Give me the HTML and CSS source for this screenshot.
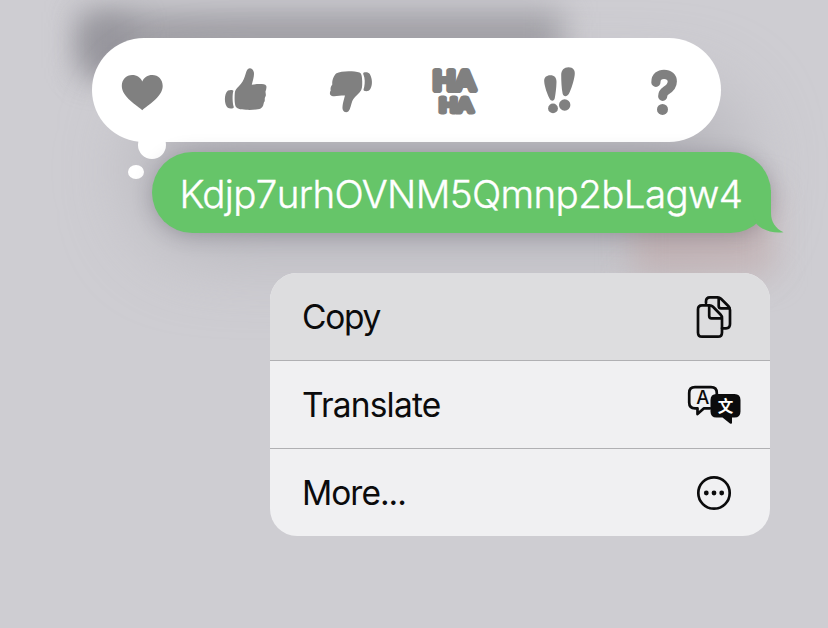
FILE: index.html
```html
<!DOCTYPE html>
<html lang="en">
<head>
<meta charset="utf-8">
<title>Messages</title>
<link rel="stylesheet" href="styles.css">
</head>
<body>
<main class="screen">
  <div class="backdrop">
    <span class="smudge smudge-dark"></span>
    <span class="smudge smudge-corner"></span>
    <span class="smudge smudge-mid"></span>
    <span class="smudge smudge-red"></span>
  </div>
  <section class="reactions">
    <svg class="reaction" viewBox="112 60 60 60"><path d="M142.300 110.300C137.500 105.500 121.800 97 121.800 86C121.800 79.500 126.300 75 132.200 75C137 75 140.500 77.600 142.300 81.500C144 77.600 147.500 75 152.300 75C158.300 75 162.700 79.500 162.700 86C162.700 97 147 105.500 142.300 110.300Z"/></svg>
    <svg class="reaction" viewBox="216 60 60 60"><path d="M249.700 68.200C247.500 68.200 246.700 70.500 245.900 73C244.500 78 243.500 80.500 241 83.700C238 87.500 235.300 88.500 234.800 93C234.500 97 234.400 102 235.300 105.500C236.300 109 240 109.300 246 109.800C252 110.200 258 109.500 260.700 108.400C263.500 106.900 263.400 104 264 102.300C265.300 101 264.500 99.500 264.900 97.700C266.700 95 265.400 93.600 265.500 91.600C266.100 89.500 266.900 87.300 266.200 85.700C264.800 83.600 257 83.900 251.800 84.800C252.800 80.500 254.600 75.500 253.800 72C253.200 69.800 251.700 68.200 249.700 68.200Z"/><path d="M228 90.500C230 89.600 233 89.600 233.400 91C232.300 93.500 232.300 103 233.800 107C234 108.800 229.500 109 227.800 107.800C224 104.500 223.800 93.500 228 90.500Z"/></svg>
    <svg class="reaction" viewBox="320 60 60 60"><path d="M336.500 73.300C341 70.500 354 70.600 359.500 72.500C361.700 73.300 362 77 362.200 81C362.300 86 362.400 89.500 359.500 92.500C356 96.300 353.500 98 352.300 101C351 104.500 350.500 109 348.500 111.200C346.700 113 344 112.300 343 110.300C341.600 107.300 343.500 101 345 95.500C341.500 95.200 335 96.700 331.900 95.900C329.500 95.200 329.500 92.500 330.700 90.500C330.200 88.700 330.700 86.500 332.300 84.500C331.800 80 334 75.200 336.500 73.300Z"/><path d="M363.800 72.500C366 71.700 368.600 72.200 369.800 74C372.600 79.500 372.600 85 370.300 89C369 91.300 366 91.600 364 90.700C363 90 363.900 88.500 364.200 87C365 82.500 365 78.500 363.600 75C363.100 73.800 363 73 363.800 72.500Z"/></svg>
    <svg class="reaction haha" viewBox="424 60 60 60"><text class="ha-large" x="433.300" y="89.600" textLength="42" lengthAdjust="spacingAndGlyphs">HA</text><text class="ha-small" x="439.500" y="111.600" textLength="33.500" lengthAdjust="spacingAndGlyphs">HA</text></svg>
    <svg class="reaction" viewBox="528 60 60 60"><path d="M544.200 81.500C543.900 77.500 546.500 75.300 550.300 75.300C554.500 75.300 556.600 78 556.500 82C556.400 88 555.500 94 554.800 98C554.200 101.500 551 101.500 549.500 98.500C547.300 94 544.600 87 544.200 81.500Z"/><path d="M561.200 75C561.200 70 564 67.200 568.500 67.200C573.300 67.200 575.400 70.300 574.700 75C573.800 81.500 571.300 89 568.900 93.800C567 97.200 563.400 97 562.600 93.500C561.600 88.500 561.200 80.500 561.200 75Z"/><circle cx="553" cy="108.400" r="4.900"/><circle cx="564.700" cy="105" r="5.700"/></svg>
    <svg class="reaction" viewBox="632 60 60 60"><path class="hook" d="M655.900 82.300C655.800 76.500 659.800 74.300 664 74.300C669 74.300 672.300 77.200 672.300 81.500C672.300 86.500 669.300 88.600 666 90.700C663.600 92.300 662.700 94 662.700 96.300"/><circle cx="662.500" cy="109.400" r="5.500"/></svg>
    <span class="puff puff-large"></span>
    <span class="puff puff-small"></span>
  </section>
  <section class="message">
    <svg class="message-text" viewBox="0 0 619 81"><text x="27.500" y="55.500" textLength="563.500">Kdjp7urhOVNM5Qmnp2bLagw4</text></svg>
    <svg class="tail" viewBox="750 190 36 44"><path d="M771 190V213C771 222 775.500 228.500 783.500 232.200C774 233.500 763 231 756.500 224L752 210V190Z"/></svg>
  </section>
  <nav class="menu">
    <div class="item item-active">
      <span class="label copy">Copy</span>
      <svg class="icon" viewBox="684 290 60 54"><g class="line"><path d="M706 303V301.500Q706 297.300 710 297.300H717.500Q719.500 297.300 721 298.800L728.500 306.300Q730 307.800 730 310V324Q730 328.300 726 328.300H722"/><path d="M718.700 298V306Q718.700 308.300 721 308.300H729.500"/><path d="M702 305.300H709.500Q711.500 305.300 713 306.800L720.500 314.500Q722 316 722 318V332.500Q722 336.700 718 336.700H702Q698 336.700 698 332.500V309.500Q698 305.300 702 305.300Z"/><path d="M709.200 306V316Q709.200 318.300 711.500 318.300H721.500"/></g></svg>
    </div>
    <div class="item">
      <span class="label translate">Translate</span>
      <svg class="icon" viewBox="684 378 60 54"><path class="line" d="M710 408.300H704L697.500 414V408.300H695Q689.200 408.300 689.200 402.500V393Q689.200 387.200 695 387.200H711Q716.800 387.200 716.800 393V395"/><path d="M716.500 394H734.500Q740.500 394 740.500 400V411.500Q740.500 417.500 734.500 417.500H732V422.500Q732 424.500 730 423.500L722.500 417.500H716.500Q710.500 417.500 710.500 411.500V400Q710.500 394 716.500 394Z"/><text class="latin" x="702.800" y="404.200">A</text><text class="han" x="725.500" y="411.800">文</text></svg>
    </div>
    <div class="item">
      <span class="label more">More...</span>
      <svg class="icon" viewBox="684 466 60 54"><circle class="line" cx="714" cy="493" r="15.700"/><circle cx="706.300" cy="493" r="2.400"/><circle cx="714" cy="493" r="2.400"/><circle cx="721.700" cy="493" r="2.400"/></svg>
    </div>
  </nav>
</main>
</body>
</html>
```
FILE: styles.css
```css
* { box-sizing: border-box; }

body {
  margin: 0;
  font-family: Inter, "Noto Sans CJK SC", sans-serif;
}

.screen {
  position: relative;
  width: 828px;
  height: 628px;
  padding-top: 38px;
  overflow: hidden;
  background: #cecdd2;
}

/* blurred conversation behind the overlay */
.backdrop { position: absolute; inset: 0; }
.smudge { position: absolute; }
.smudge-dark { left: 80px; top: 12px; width: 482px; height: 56px; background: #9f9ea4; filter: blur(16px); }
.smudge-corner { left: 84px; top: 20px; width: 50px; height: 56px; background: #96959c; filter: blur(15px); }
.smudge-mid { left: 140px; top: 90px; width: 600px; height: 160px; border-radius: 70px; background: #b5b4ba; filter: blur(38px); }
.smudge-red { left: 632px; top: 190px; width: 142px; height: 86px; background: rgba(192, 172, 174, .7); filter: blur(16px); }

.reactions {
  position: relative;
  display: flex;
  align-items: center;
  gap: 44px;
  width: 629px;
  height: 104px;
  margin-left: 92px;
  padding-left: 20px;
  border-radius: 52px;
  background: #fff;
}
.reaction { flex: none; width: 60px; height: 60px; fill: #808080; }
.hook { fill: none; stroke: #808080; stroke-width: 9.2; stroke-linecap: round; }
.haha text {
  font-weight: 400;
  stroke: #808080;
  stroke-linejoin: round;
}
.ha-large { font-size: 26px; stroke-width: 6.2px; }
.ha-small { font-size: 19px; stroke-width: 5.2px; }
.puff { position: absolute; border-radius: 50%; background: #fff; }
.puff-large { left: 46px; top: 93px; width: 28px; height: 28px; }
.puff-small { left: 36px; top: 127px; width: 16px; height: 14px; }

.message {
  position: relative;
  width: 619px;
  height: 81px;
  margin: 10px 0 0 152px;
  border-radius: 40.5px;
  background: #66c569;
  box-shadow: 0 3px 20px rgba(45, 40, 55, .25);
}
.message-text {
  display: block;
  width: 619px;
  height: 81px;
  font-size: 38.5px;
  font-weight: 300;
  fill: #fff;
  stroke: #fff;
  stroke-width: .4px;
}
.tail { position: absolute; left: 598px; top: 38px; width: 36px; height: 44px; fill: #66c569; }

.menu {
  position: relative;
  width: 500px;
  height: 263px;
  margin: 40px 0 0 270px;
  border-radius: 27px;
  overflow: hidden;
  background: #f0f0f2;
}
.item {
  display: flex;
  align-items: center;
  justify-content: space-between;
  height: 88px;
  padding: 0 26px 0 32px;
  border-bottom: 1px solid #b0b0b3;
}
.item:last-child { height: 87px; border-bottom: 0; }
.item-active { background: #dddddf; }
.label { padding-top: 1px; font-size: 33.5px; line-height: 44px; color: #0b0b0c; }
.copy { letter-spacing: -1.3px; }
.translate { letter-spacing: -.8px; }
.more { letter-spacing: -1px; }
.icon { width: 60px; height: 54px; fill: #0b0b0c; }
.line { fill: none; stroke: #0b0b0c; stroke-width: 2.7; stroke-linejoin: round; stroke-linecap: round; }
.latin { font-size: 18.5px; font-weight: 500; text-anchor: middle; }
.han { font-family: "Noto Sans CJK SC", sans-serif; font-size: 15.5px; font-weight: 700; text-anchor: middle; fill: #fff; }
```
